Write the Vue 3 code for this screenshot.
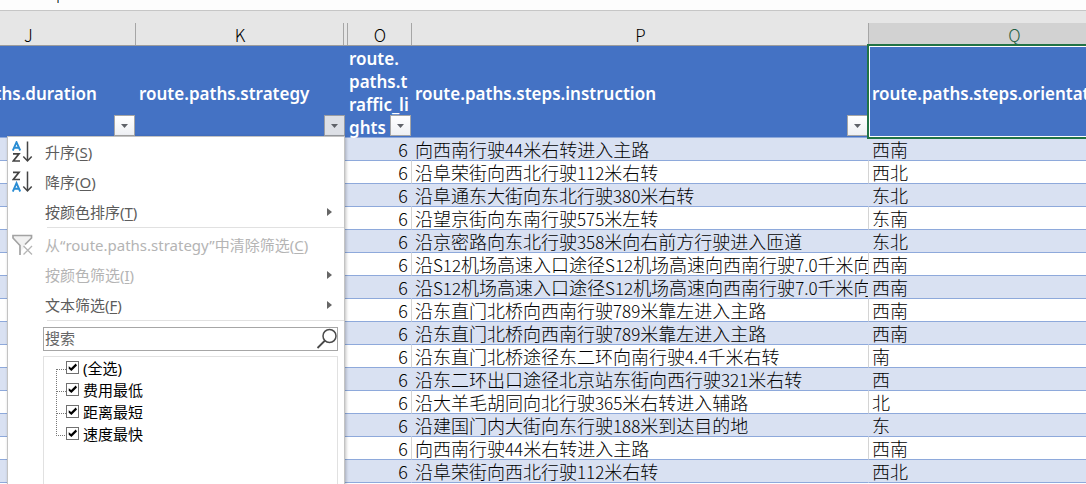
<script setup>
import { ref } from 'vue'

const headers = [
  { key: 'j', text: 'route.paths.duration', filter: true },
  { key: 'k', text: 'route.paths.strategy', filter: true, open: true },
  { key: 'gap', text: '' },
  { key: 'o', text: 'route.\npaths.t\nraffic_li\nghts', filter: true },
  { key: 'p', text: 'route.paths.steps.instruction', filter: true },
  { key: 'q', text: 'route.paths.steps.orientation', selected: true }
]
const letters = ['J', 'K', '', 'O', 'P', 'Q']

const rows = [
  ['向西南行驶44米右转进入主路', '西南'],
  ['沿阜荣街向西北行驶112米右转', '西北'],
  ['沿阜通东大街向东北行驶380米右转', '东北'],
  ['沿望京街向东南行驶575米左转', '东南'],
  ['沿京密路向东北行驶358米向右前方行驶进入匝道', '东北'],
  ['沿S12机场高速入口途径S12机场高速向西南行驶7.0千米向', '西南'],
  ['沿S12机场高速入口途径S12机场高速向西南行驶7.0千米向', '西南'],
  ['沿东直门北桥向西南行驶789米靠左进入主路', '西南'],
  ['沿东直门北桥向西南行驶789米靠左进入主路', '西南'],
  ['沿东直门北桥途径东二环向南行驶4.4千米右转', '南'],
  ['沿东二环出口途径北京站东街向西行驶321米右转', '西'],
  ['沿大羊毛胡同向北行驶365米右转进入辅路', '北'],
  ['沿建国门内大街向东行驶188米到达目的地', '东'],
  ['向西南行驶44米右转进入主路', '西南'],
  ['沿阜荣街向西北行驶112米右转', '西北']
]

// Splits a text into runs of Latin characters and runs of Chinese ones.
const runs = (text) =>
  text.match(/[\w.]+|[^\w.]+/g).map((part) => ({ part, latin: /^[\w.]/.test(part) }))

const groups = [
  [
    { label: '升序', accel: 'S', icon: 'asc' },
    { label: '降序', accel: 'O', icon: 'desc' },
    { label: '按颜色排序', accel: 'T', sub: true }
  ],
  [
    { label: '从“route.paths.strategy”中清除筛选', accel: 'C', icon: 'clear', disabled: true },
    { label: '按颜色筛选', accel: 'I', sub: true, disabled: true },
    { label: '文本筛选', accel: 'F', sub: true }
  ]
]

const search = ref('')
const options = ref([
  { label: '(全选)', on: true },
  { label: '费用最低', on: true },
  { label: '距离最短', on: true },
  { label: '速度最快', on: true }
])
</script>

<template>
  <main class="sheet">
    <div class="formula-bar"><span class="caret"></span></div>

    <table class="grid">
      <colgroup>
        <col class="w-j" /><col class="w-k" /><col class="w-gap" />
        <col class="w-o" /><col class="w-p" /><col class="w-q" />
      </colgroup>
      <thead>
        <tr class="letters">
          <th v-for="(l, i) in letters" :key="i" :class="{ active: l === 'Q' }"><span>{{ l }}</span></th>
        </tr>
        <tr class="titles">
          <th v-for="h in headers" :key="h.key" :class="[h.key, { selected: h.selected }]">
            <span class="title">{{ h.text }}</span>
            <button v-if="h.filter" type="button" class="drop" :class="{ open: h.open }" aria-label="筛选">
              <svg width="7" height="4" viewBox="0 0 7 4"><path d="M0 0h7L3.5 4z" fill="#5f6268" /></svg>
            </button>
          </th>
        </tr>
      </thead>
      <tbody>
        <tr v-for="(r, i) in rows" :key="i">
          <td></td><td></td><td class="gap"></td>
          <td class="num">6</td>
          <td><span v-for="(s, n) in runs(r[0])" :key="n" :class="{ latin: s.latin }">{{ s.part }}</span></td>
          <td>{{ r[1] }}</td>
        </tr>
      </tbody>
    </table>

    <div class="menu">
      <div v-for="(g, gi) in groups" :key="gi" class="group">
        <button v-for="m in g" :key="m.accel" type="button" class="item" :disabled="m.disabled">
          <span class="icon">
            <svg v-if="m.icon === 'asc' || m.icon === 'desc'" width="22" height="22" viewBox="0 0 22 22" fill="none">
              <g :transform="m.icon === 'asc' ? 'translate(0 0)' : 'translate(0 11)'" stroke="#2a8dd4" stroke-width="1.9">
                <path d="M0.8 9.500L4.500 1.200L8.200 9.500M2 6.700H7" />
              </g>
              <g :transform="m.icon === 'asc' ? 'translate(0 11.500)' : 'translate(0 0)'" stroke="#444" stroke-width="1.700">
                <path d="M1 1.300H7L1.300 8.500H8" />
              </g>
              <path d="M15.500 0.500V20M11.300 15.500L15.500 20L19.700 15.500" stroke="#444" stroke-width="1.500" />
            </svg>
            <svg v-else-if="m.icon === 'clear'" width="22" height="22" viewBox="0 0 22 22" fill="none">
              <path d="M1 1.500H19.500V4L13 11V13L9 17L8.500 11L1 4Z" fill="#f1f1f1" />
              <path d="M8 21V11.500L1 4V1.500H19.500V4L13 10.500" stroke="#a3a3a3" stroke-width="1.700" />
              <path d="M11.500 12L20 20.500M20 12L11.500 20.500" stroke="#b5b5b5" stroke-width="1.300" />
            </svg>
          </span>
          <span class="label">{{ m.label }}(<u>{{ m.accel }}</u>)</span>
          <svg v-if="m.sub" class="arrow" width="5" height="8" viewBox="0 0 5 8"><path d="M0 0L5 4L0 8z" fill="#666" /></svg>
        </button>
      </div>

      <label class="search">
        <input v-model="search" type="text" placeholder="搜索" aria-label="搜索" />
        <svg width="22" height="22" viewBox="0 0 22 22" fill="none" stroke="#4a4a4a" stroke-width="1.500">
          <circle cx="14.500" cy="8" r="6.500" /><path d="M10 12.500L2.500 20" stroke-width="1.800" />
        </svg>
      </label>

      <div class="tree">
        <label v-for="o in options" :key="o.label" class="node">
          <input v-model="o.on" type="checkbox" />
          <span>{{ o.label }}</span>
        </label>
      </div>
    </div>
  </main>
</template>

<style>
body {
  background: #fff;
}
</style>

<style scoped>
.sheet {
  position: relative;
  height: 100vh;
  overflow: hidden;
  background: #fff;
  color: #000;
  font-family: "Noto Sans CJK SC", sans-serif;
}
.formula-bar {
  display: flex;
  height: 10px;
  padding-left: 57px;
  background: #fdfdfd;
  border-bottom: 1px solid #c6c6c6;
}
.caret {
  width: 1px;
  height: 3px;
  background: #c88a4a;
  border-right: 1px solid #3c86c8;
}
.grid {
  width: 1239px;
  margin-left: -79px;
  table-layout: fixed;
  border-collapse: separate;
  border-spacing: 0;
}
.w-j { width: 215px; }
.w-k { width: 208px; }
.w-gap { width: 4px; }
.w-o { width: 64px; }
.w-p { width: 457px; }
.w-q { width: 291px; }
th,
td {
  box-sizing: border-box;
  padding: 0;
}
.letters th {
  height: 35px;
  padding-top: 12px;
  background: #e6e6e6;
  border-bottom: 1px solid #9c9c9c;
  font-size: 17px;
  font-weight: 300;
  line-height: 24px;
}
.letters span {
  display: block;
  height: 22px;
  padding-left: 1px;
  border-right: 1px solid #a6a6a6;
}
.letters .active span {
  background: #d2d2d2;
  color: #1f5f43;
}
.titles th {
  position: relative;
  height: 92px;
  padding-top: 1px;
  padding-left: 3px;
  background: #4472c4;
  border-bottom: 1px solid #8ea9db;
  color: #fff;
  font-family: "Noto Sans", "Noto Sans CJK SC", sans-serif;
  font-size: 17px;
  font-weight: 600;
  line-height: 23px;
  text-align: left;
  vertical-align: middle;
}
.titles .gap,
td.gap {
  padding: 0;
  border-right: 0;
}
.titles .o {
  padding-left: 1px;
}
.title {
  display: block;
  margin-bottom: -2px;
  white-space: pre;
}
.selected::after {
  content: "";
  position: absolute;
  inset: -2px 0 -2px -2px;
  border: 2px solid #217346;
  box-shadow: inset 0 0 0 1px #fff;
}
.drop {
  position: absolute;
  right: 1px;
  bottom: 1px;
  display: flex;
  align-items: center;
  justify-content: center;
  width: 21px;
  height: 21px;
  padding: 0;
  background: linear-gradient(#fff, #eef0f4);
  border: 1px solid #a6a6a6;
}
.drop.open {
  right: -1px;
  z-index: 1;
  background: #dde0e6;
  border-color: #9a9da3;
}
td {
  height: 23px;
  padding-left: 3px;
  overflow: hidden;
  border-right: 1px solid #d4d4d4;
  border-bottom: 1px solid #8ea9db;
  font-size: 18px;
  font-weight: 300;
  line-height: 22px;
  white-space: nowrap;
}
tbody tr:nth-child(odd) td {
  background: #d9e1f2;
  border-right-color: #d9e1f2;
}
.latin {
  font-size: 17px;
  line-height: 16px;
}
.num {
  padding-right: 3px;
  text-align: right;
}
.menu {
  position: absolute;
  top: 136px;
  left: 7px;
  z-index: 2;
  box-sizing: border-box;
  width: 338px;
  background: #fff;
  border: 1px solid #c3c3c3;
  box-shadow: 1px 1px 3px rgba(0, 0, 0, 0.25);
  font-family: "Noto Sans", "Noto Sans CJK SC", sans-serif;
  font-size: 15px;
}
.group {
  margin-bottom: 2px;
  background: linear-gradient(#e1e1e1, #e1e1e1) 39px 100% / 100% 1px no-repeat;
  padding-bottom: 1px;
}
.item {
  display: flex;
  align-items: center;
  width: 100%;
  height: 30px;
  padding: 0 12px 0 4px;
  background: none;
  border: 0;
  color: #5c5c5c;
  font: inherit;
  text-align: left;
  white-space: nowrap;
}
.item:disabled {
  color: #b4b4b4;
}
.icon {
  display: flex;
  width: 33px;
  flex: none;
}
.label {
  flex: 1;
  padding-bottom: 2px;
}
.label u {
  text-underline-offset: 2px;
}
.search {
  display: flex;
  align-items: center;
  box-sizing: border-box;
  height: 24px;
  margin: 6px 6px 5px 35px;
  border: 1px solid #a6a6a6;
}
.search input {
  flex: 1;
  min-width: 0;
  padding: 0 0 2px 1px;
  border: 0;
  outline: 0;
  background: none;
  font: inherit;
}
.search input::placeholder {
  color: #666;
  opacity: 1;
}
.tree {
  min-height: 200px;
  margin: 0 6px 0 35px;
  padding: 1px 0 0 12px;
  border: 1px solid #e1e1e1;
}
.node {
  position: relative;
  display: flex;
  align-items: center;
  gap: 4px;
  height: 22px;
  padding-left: 10px;
}
.node span {
  padding-bottom: 4px;
}
.node::before {
  content: "";
  position: absolute;
  top: 11px;
  left: 0;
  width: 9px;
  height: 22px;
  border-top: 1px dotted #777;
  border-left: 1px dotted #777;
}
.node:last-child::before {
  height: 0;
  border-left: 0;
}
.node input {
  display: flex;
  align-items: center;
  justify-content: center;
  appearance: none;
  width: 13px;
  height: 13px;
  margin: 0 0 4px;
  border: 1px solid #707070;
  background: #fff;
}
.node input:checked::before {
  content: "";
  width: 9px;
  height: 8px;
  background: #000;
  clip-path: polygon(8% 40%, 35% 62%, 86% 6%, 100% 30%, 38% 100%, 8% 72%);
}
</style>
